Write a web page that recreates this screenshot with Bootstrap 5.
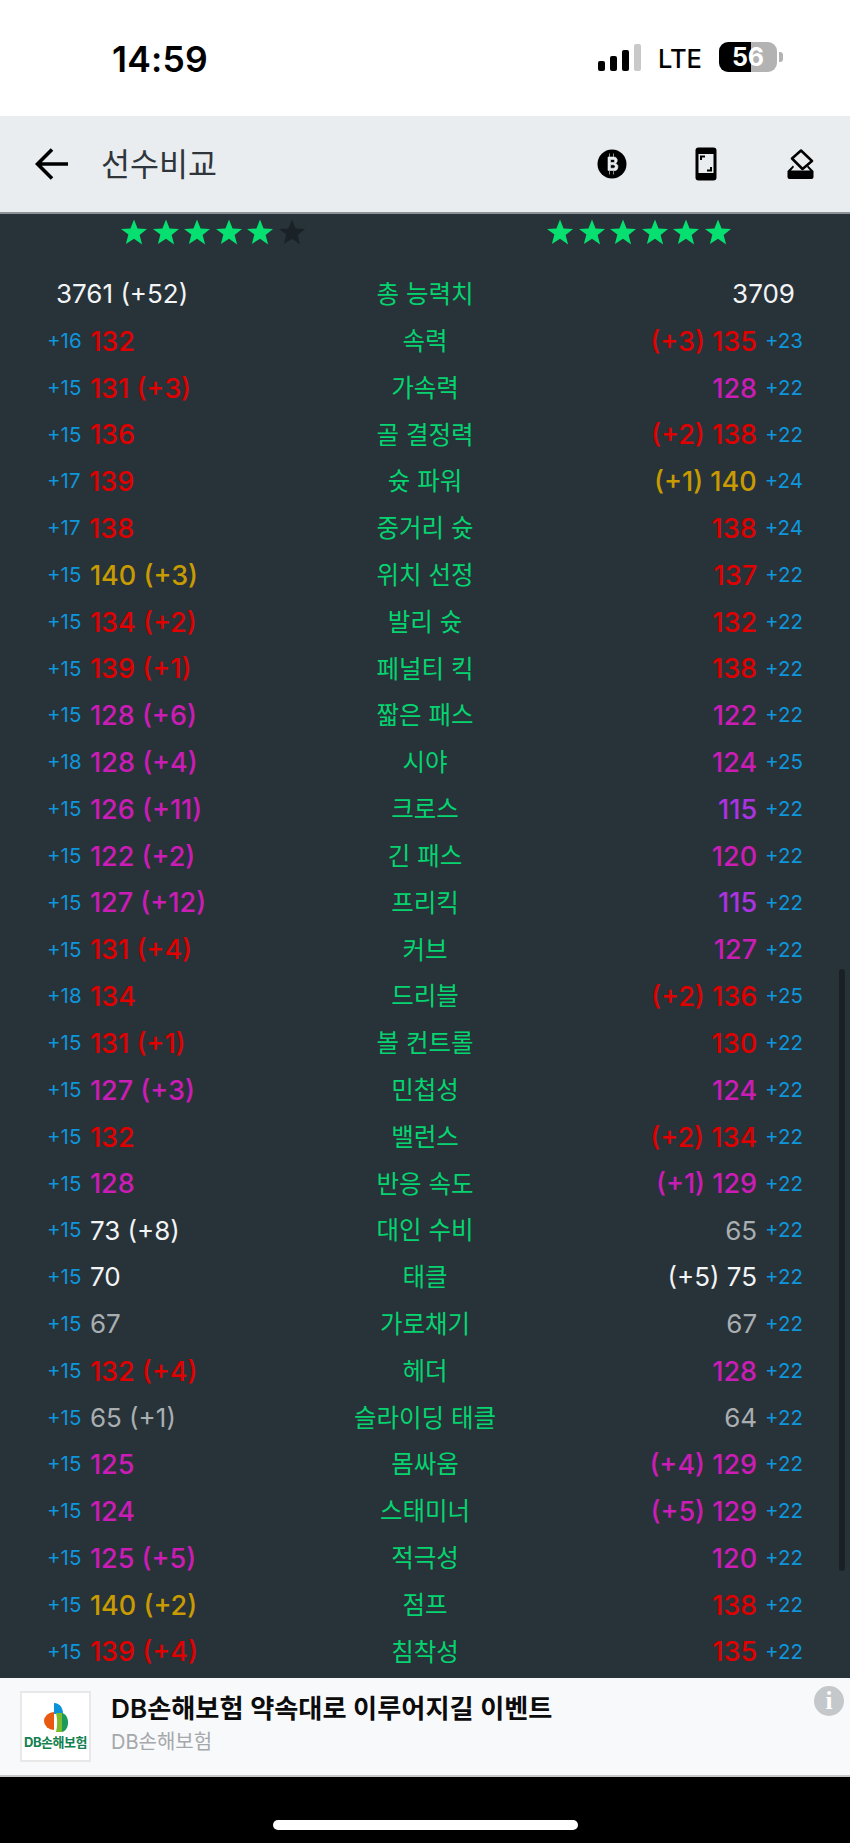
<!DOCTYPE html>
<html lang="ko">
<head>
  <meta charset="UTF-8">
  <meta name="viewport" content="width=device-width, initial-scale=1.0">
  <title>선수비교</title>
  <link href="https://cdn.jsdelivr.net/npm/bootstrap@5.3.0/dist/css/bootstrap.min.css" rel="stylesheet">
  <style>
    html, body { height: 100%; }
    body {
      width: 850px;
      height: 1843px;
      overflow: hidden;
      background: #000;
      font-family: "Inter", "Liberation Sans", "Noto Sans CJK KR", sans-serif;
    }
    .status-bar { height: 116px; background: #fff; padding-left: 112px; }
    .status-time { font-size: 35.5px; font-weight: 600; color: #000; line-height: 1; padding-top: 42px; letter-spacing: .2px; }
    .status-right { padding-top: 42px; padding-right: 67px; }
    .signal { margin-top: 2px; }
    .status-lte { font-size: 25.5px; font-weight: 500; line-height: 1; color: #000; margin: 4px 17px 0 16px; }
    .battery { width: 58px; height: 30px; border-radius: 9px; font-size: 25px; font-weight: 700; line-height: 30px; text-align: center; color: #fff; background: linear-gradient(90deg, #000 0 55%, #b3b3b3 55% 100%); }
    .battery-tip { width: 4px; height: 10px; background: #b3b3b3; border-radius: 0 3px 3px 0; margin: 10px 0 0 2px; }
    .app-bar { height: 98px; background: #eaedef; border-bottom: 2px solid #8d9397; padding: 0 3px 0 35px; }
    .app-title { font-size: 31.5px; color: #2f363b; margin-left: 32px; padding-top: 2px; line-height: 1; }
    .app-icon { width: 94px; display: flex; justify-content: center; }
    .stat-panel { height: 1464px; background: #283239; position: relative; overflow: hidden; }
    .star-row { height: 37px; padding-top: 5px; }
    .star-col { width: 425px; }
    .star-col svg { display: block; width: 26px; height: 26px; margin-right: 5.5px; }
    .star-left { padding-left: 121px; }
    .star-right { padding-left: 122px; }
    .stat-list { padding-top: 20px; }
    .stat-line { height: 46.82px; display: grid; grid-template-columns: 1fr 1fr 1fr; align-items: center; font-size: 27px; line-height: 1; }
    .side-left { padding-left: 47px; display: flex; align-items: center; white-space: nowrap; }
    .side-right { padding-right: 47px; display: flex; align-items: center; justify-content: flex-end; white-space: nowrap; }
    .stat-name { color: #05d470; text-align: center; font-size: 24.5px; }
    .boost { color: #0e96dc; font-size: 20.5px; font-weight: 400; }
    .side-left .boost { margin-right: 8.5px; }
    .side-right .boost { margin-left: 8px; }
    .val { font-weight: 500; }
    .total-left { padding-left: 56px; color: #f2f4f5; font-size: 26px; }
    .total-right { padding-right: 55px; color: #f2f4f5; font-size: 26px; }
    .c-red { color: #e00000; }
    .c-mag { color: #cb1cb6; }
    .c-pur { color: #ab33e2; }
    .c-gold { color: #c89b00; }
    .c-white { color: #f2f4f5; font-weight: 400; font-size: 26px; }
    .c-grey { color: #a9aeb1; font-weight: 400; font-size: 26px; }
    .scroll-thumb { position: absolute; right: 5px; top: 755px; width: 6px; height: 602px; border-radius: 3px; background: #1a2126; }
    .ad-bar { height: 99px; background: #f8f9fb; border-bottom: 2px solid #c9c9c9; padding-left: 20px; position: relative; }
    .ad-logo { width: 71px; height: 71px; background: #fff; border: 2px solid #e8e8e8; display: flex; flex-direction: column; align-items: center; justify-content: flex-end; padding-bottom: 11px; }
    .ad-logo svg { margin-bottom: 3px; }
    .ad-logo-text { font-size: 13px; font-weight: 700; color: #12804f; line-height: 1; white-space: nowrap; letter-spacing: -.5px; }
    .ad-title { font-size: 26.2px; font-weight: 600; color: #0c0c0c; line-height: 1; margin-bottom: 10px; }
    .ad-sub { font-size: 20px; color: #a5a8ab; line-height: 1; }
    .ad-text { margin-left: 20px; margin-top: -5px; }
    .ad-info { position: absolute; right: 6px; top: 8px; width: 30px; height: 30px; border-radius: 50%; background: #c5c8ca; color: #fff; font-family: "Liberation Serif", serif; font-weight: 700; font-size: 25px; line-height: 30px; text-align: center; }
    .home-pill { width: 305px; height: 10px; border-radius: 5px; background: #fff; margin: 43px auto 0; }
  </style>
</head>
<body>
  <div class="status-bar d-flex justify-content-between">
    <div class="status-time">14:59</div>
    <div class="status-right d-flex align-items-start">
      <svg class="signal" width="44" height="28" viewBox="0 0 44 28">
        <rect x="0" y="17" width="7" height="10" rx="2" fill="#000"/>
        <rect x="12" y="12" width="7" height="15" rx="2" fill="#000"/>
        <rect x="24" y="6" width="7" height="21" rx="2" fill="#000"/>
        <rect x="36" y="0" width="7" height="27" rx="2" fill="#c9c9c9"/>
      </svg>
      <span class="status-lte">LTE</span>
      <div class="battery">56</div>
      <div class="battery-tip"></div>
    </div>
  </div>

  <div class="app-bar d-flex align-items-center">
    <svg width="34" height="32" viewBox="0 0 34 32" fill="none" stroke="#000" stroke-width="3.6">
      <path d="M33 16H3M17 1.5 2.5 16 17 30.5"/>
    </svg>
    <div class="app-title flex-grow-1">선수비교</div>
    <div class="app-icon">
      <svg width="30" height="30" viewBox="0 0 30 30">
        <circle cx="15" cy="15" r="14.5" fill="#000"/>
        <path d="M11 8h5.5a3.3 3.3 0 0 1 1.5 6.4 3.6 3.6 0 0 1-1.5 7.1H11zM12.5 4.5v3.500M16.5 4.5v3.500M12.500 22v3.500M16.500 22v3.500M13.500 10.500v3h2.800a1.500 1.500 0 0 0 0-3zM13.500 15.800v3.400h3a1.700 1.700 0 0 0 0-3.400z" fill="#eaedef" fill-rule="evenodd" stroke="#eaedef" stroke-width=".6"/>
      </svg>
    </div>
    <div class="app-icon">
      <svg width="22" height="34" viewBox="0 0 22 34">
        <rect x="0.5" y="0.5" width="21" height="33" rx="3" fill="#000"/>
        <rect x="3.5" y="7" width="15" height="19" fill="#eaedef"/>
        <path d="M6 13V9.5h4M16 20v3.500h-4" fill="none" stroke="#000" stroke-width="2"/>
      </svg>
    </div>
    <div class="app-icon">
      <svg width="27" height="31" viewBox="0 0 27 31">
        <path d="M14 1.5 25 12 15.500 20 5 9.500z" fill="none" stroke="#000" stroke-width="2.5" stroke-linejoin="round"/>
        <path d="M6 16.500.5 22v6a2 2 0 0 0 2 2h22a2 2 0 0 0 2-2v-6L21 16.500l-1 1.500 3 3.500H4l3-3.500z" fill="#000"/>
      </svg>
    </div>
  </div>

  <div class="stat-panel">
    <div class="star-row d-flex" id="stars"></div>
    <div class="stat-list" id="list"></div>
    <div class="scroll-thumb"></div>
  </div>

  <div class="ad-bar d-flex align-items-center">
    <div class="ad-logo">
      <svg width="24" height="30" viewBox="0 0 24 30">
        <path d="M10 0C16 0 19 5 19 11H10z" fill="#0a93d8"/>
        <path d="M10 9A10 9 0 0 0 10 27z" fill="#e85a12"/>
        <path d="M12 10h6v19h-6c1.500-6 1.500-13 0-19z" fill="#7cbb2e"/>
        <path d="M18 10c4 1 6 5 6 9.500S22 28 18 29z" fill="#1c9a5a"/>
      </svg>
      <div class="ad-logo-text">DB손해보험</div>
    </div>
    <div class="ad-text">
      <div class="ad-title">DB손해보험 약속대로 이루어지길 이벤트</div>
      <div class="ad-sub">DB손해보험</div>
    </div>
    <div class="ad-info">i</div>
  </div>
  <div class="home-pill"></div>

  <script>
    // boost, value, bonus, colour | name | boost, value, bonus, colour
    const rows = [
      [16, "132", "", "red", "속력", 23, "135", "+3", "red"],
      [15, "131", "+3", "red", "가속력", 22, "128", "", "mag"],
      [15, "136", "", "red", "골 결정력", 22, "138", "+2", "red"],
      [17, "139", "", "red", "슛 파워", 24, "140", "+1", "gold"],
      [17, "138", "", "red", "중거리 슛", 24, "138", "", "red"],
      [15, "140", "+3", "gold", "위치 선정", 22, "137", "", "red"],
      [15, "134", "+2", "red", "발리 슛", 22, "132", "", "red"],
      [15, "139", "+1", "red", "페널티 킥", 22, "138", "", "red"],
      [15, "128", "+6", "mag", "짧은 패스", 22, "122", "", "mag"],
      [18, "128", "+4", "mag", "시야", 25, "124", "", "mag"],
      [15, "126", "+11", "mag", "크로스", 22, "115", "", "pur"],
      [15, "122", "+2", "mag", "긴 패스", 22, "120", "", "mag"],
      [15, "127", "+12", "mag", "프리킥", 22, "115", "", "pur"],
      [15, "131", "+4", "red", "커브", 22, "127", "", "mag"],
      [18, "134", "", "red", "드리블", 25, "136", "+2", "red"],
      [15, "131", "+1", "red", "볼 컨트롤", 22, "130", "", "red"],
      [15, "127", "+3", "mag", "민첩성", 22, "124", "", "mag"],
      [15, "132", "", "red", "밸런스", 22, "134", "+2", "red"],
      [15, "128", "", "mag", "반응 속도", 22, "129", "+1", "mag"],
      [15, "73", "+8", "white", "대인 수비", 22, "65", "", "grey"],
      [15, "70", "", "white", "태클", 22, "75", "+5", "white"],
      [15, "67", "", "grey", "가로채기", 22, "67", "", "grey"],
      [15, "132", "+4", "red", "헤더", 22, "128", "", "mag"],
      [15, "65", "+1", "grey", "슬라이딩 태클", 22, "64", "", "grey"],
      [15, "125", "", "mag", "몸싸움", 22, "129", "+4", "mag"],
      [15, "124", "", "mag", "스태미너", 22, "129", "+5", "mag"],
      [15, "125", "+5", "mag", "적극성", 22, "120", "", "mag"],
      [15, "140", "+2", "gold", "점프", 22, "138", "", "red"],
      [15, "139", "+4", "red", "침착성", 22, "135", "", "red"]
    ];

    let html = '<div class="stat-line"><div class="total-left">3761 (+52)</div><div class="stat-name">총 능력치</div><div class="side-right total-right">3709</div></div>';
    rows.forEach(r => {
      const leftText = r[2] ? r[1] + " (" + r[2] + ")" : r[1];
      const rightText = r[7] ? "(" + r[7] + ") " + r[6] : r[6];
      html += '<div class="stat-line">'
        + '<div class="side-left"><span class="boost">+' + r[0] + '</span><span class="val c-' + r[3] + '">' + leftText + '</span></div>'
        + '<div class="stat-name">' + r[4] + '</div>'
        + '<div class="side-right"><span class="val c-' + r[8] + '">' + rightText + '</span><span class="boost">+' + r[5] + '</span></div>'
        + '</div>';
    });
    document.getElementById("list").innerHTML = html;

    const star = fill => '<svg viewBox="0 0 24 24"><path d="M12 .5l3.300 8.300 8.700.5-6.800 5.500 2.300 8.700L12 18.200 4.500 23l2.300-8.700L0 9.300l8.700-.5z" fill="' + fill + '"/></svg>';
    const left = [1, 1, 1, 1, 1, 0].map(f => star(f ? "#05e070" : "#1a2228")).join("");
    const right = [1, 1, 1, 1, 1, 1].map(() => star("#05e070")).join("");
    document.getElementById("stars").innerHTML =
      '<div class="star-col star-left d-flex">' + left + '</div><div class="star-col star-right d-flex">' + right + '</div>';
  </script>
  <script src="https://cdn.jsdelivr.net/npm/bootstrap@5.3.0/dist/js/bootstrap.bundle.min.js"></script>
</body>
</html>
